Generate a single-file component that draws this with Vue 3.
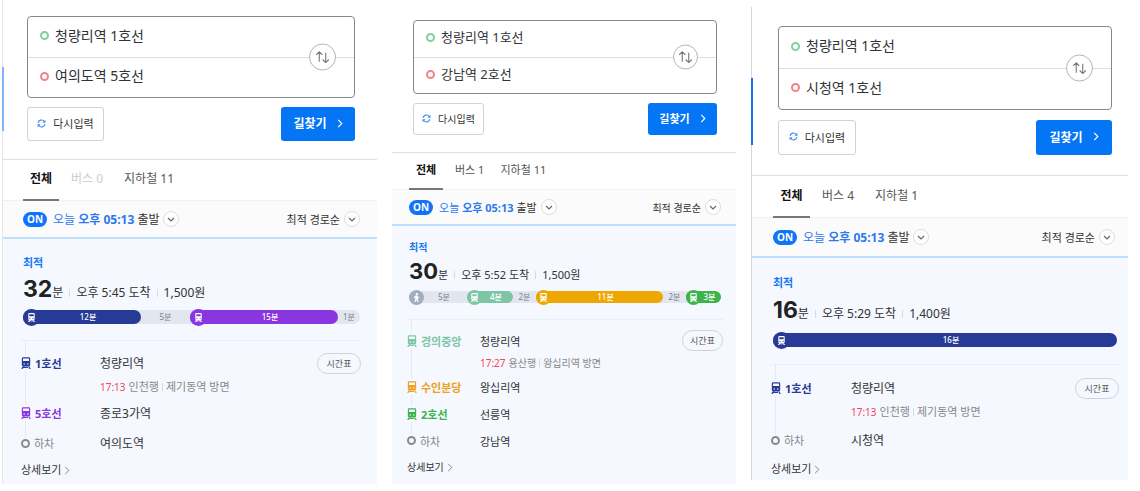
<script setup>
import { ref } from 'vue'

const routes = ref([
  {
    id: 'a',
    size: 'medium',
    rail: true,
    from: '청량리역 1호선',
    to: '여의도역 5호선',
    bus: 0,
    subway: 11,
    minutes: 32,
    arrival: '오후 5:45 도착',
    fare: '1,500원',
    track: [
      { text: '12분', weight: 118, color: '#263a96', icon: 'metro' },
      { text: '5분', weight: 49 },
      { text: '15분', weight: 148, color: '#8936e0', icon: 'metro' },
      { text: '1분', weight: 22 },
    ],
    legs: [
      {
        line: '1호선',
        color: '#263a96',
        station: '청량리역',
        time: '17:13',
        bound: '인천행',
        toward: '제기동역 방면',
      },
      { line: '5호선', color: '#8936e0', station: '종로3가역' },
    ],
    end: '여의도역',
  },
  {
    id: 'b',
    size: 'small',
    rail: false,
    from: '청량리역 1호선',
    to: '강남역 2호선',
    bus: 1,
    subway: 11,
    minutes: 30,
    arrival: '오후 5:52 도착',
    fare: '1,500원',
    track: [
      { text: '5분', weight: 58, icon: 'walk' },
      { text: '4분', weight: 46, color: '#7cc6a5', icon: 'metro' },
      { text: '2분', weight: 23 },
      { text: '11분', weight: 127, color: '#eea700', icon: 'metro' },
      { text: '2분', weight: 23 },
      { text: '3분', weight: 35, color: '#3cb44a', icon: 'metro' },
    ],
    legs: [
      {
        line: '경의중앙',
        color: '#7cc6a5',
        station: '청량리역',
        time: '17:27',
        bound: '용산행',
        toward: '왕십리역 방면',
      },
      { line: '수인분당', color: '#f0a020', station: '왕십리역' },
      { line: '2호선', color: '#3cb44a', station: '선릉역' },
    ],
    end: '강남역',
  },
  {
    id: 'c',
    size: 'large',
    rail: true,
    from: '청량리역 1호선',
    to: '시청역 1호선',
    bus: 4,
    subway: 1,
    minutes: 16,
    arrival: '오후 5:29 도착',
    fare: '1,400원',
    track: [{ text: '16분', weight: 1, color: '#263a96', icon: 'metro' }],
    legs: [
      {
        line: '1호선',
        color: '#263a96',
        station: '청량리역',
        time: '17:13',
        bound: '인천행',
        toward: '제기동역 방면',
      },
    ],
    end: '시청역',
  },
])

function swap(route) {
  const from = route.from
  route.from = route.to
  route.to = from
}
</script>

<template>
  <main class="page">
    <section v-for="r in routes" :key="r.id" class="panel" :class="[r.size, { rail: r.rail }]">
      <form class="search" @submit.prevent>
        <div class="fields">
          <label class="field">
            <span class="dot start"></span>
            <input v-model="r.from" type="text" aria-label="출발지" />
          </label>
          <label class="field">
            <span class="dot goal"></span>
            <input v-model="r.to" type="text" aria-label="도착지" />
          </label>
          <button class="swap" type="button" aria-label="출발지와 도착지 바꾸기" @click="swap(r)">
            <svg viewBox="0 0 16 14">
              <path d="M4.5 12V1.5M1.2 4.8l3.3-3.3 3.3 3.3M11.5 2.5V13M8.2 9.7l3.3 3.3 3.3-3.3" />
            </svg>
          </button>
        </div>
        <div class="actions">
          <button class="reset" type="button">
            <svg viewBox="0 0 12 12">
              <path d="M1.5 5.2A4.5 4.5 0 0 1 9.6 3.3M10.5 6.8A4.5 4.5 0 0 1 2.4 8.7" />
              <path class="tip" d="M11.2 1v3.9H7.3zM.8 11V7.1h3.9z" />
            </svg>
            다시입력
          </button>
          <button class="find" type="submit">
            길찾기
            <svg viewBox="0 0 6 10"><path d="M1 1l4 4-4 4" /></svg>
          </button>
        </div>
      </form>

      <nav class="tabs">
        <button class="tab active" type="button">전체</button>
        <button class="tab" :class="{ empty: r.bus === 0 }" type="button">버스 {{ r.bus }}</button>
        <button class="tab subway" type="button">지하철 {{ r.subway }}</button>
      </nav>

      <div class="options">
        <button class="option depart" type="button">
          <span class="on">ON</span>
          <span><span class="blue">오늘 <b>오후 05:13</b></span> 출발</span>
          <span class="chev"><svg viewBox="0 0 8 5"><path d="M1 1l3 3 3-3" /></svg></span>
        </button>
        <button class="option sort" type="button">
          최적 경로순
          <span class="chev"><svg viewBox="0 0 8 5"><path d="M1 1l3 3 3-3" /></svg></span>
        </button>
      </div>

      <article class="result">
        <div class="summary">
          <strong class="best">최적</strong>
          <p class="total">
            <strong>{{ r.minutes }}</strong><span class="unit">분</span>
            <i class="bar"></i><span>{{ r.arrival }}</span>
            <i class="bar"></i><span>{{ r.fare }}</span>
          </p>
          <div class="track">
            <span
              v-for="(s, i) in r.track"
              :key="i"
              class="seg"
              :class="{ ride: s.color, iconed: s.icon }"
              :style="{ flexGrow: s.weight, background: s.color, color: s.color }"
            >
              <span v-if="s.icon" class="badge" :class="s.icon">
                <svg v-if="s.icon === 'metro'" viewBox="0 0 12 14">
                  <path
                    fill-rule="evenodd"
                    d="M2.5 0h7A1.5 1.5 0 0 1 11 1.5V9.5A1.5 1.5 0 0 1 9.5 11h-7A1.5 1.5 0 0 1 1 9.5V1.5A1.5 1.5 0 0 1 2.5 0zM2.6 2v3h6.8V2zM3.5 7.3a1 1 0 1 0 0 2 1 1 0 0 0 0-2zM8.5 7.3a1 1 0 1 0 0 2 1 1 0 0 0 0-2z"
                  />
                  <path d="M2.3 10.8h2.2L2.6 14H.4zM9.7 10.8H7.5L9.4 14h2.2zM3 11.6h6V13H3z" />
                </svg>
                <svg v-else viewBox="0 0 12 14">
                  <circle cx="6.5" cy="1.8" r="1.8" />
                  <path d="M4.8 4h3l.9 2.2 1.7 1-.6 1.3-1.9-.8v1.9l1.5 4.4H7.4L5.9 10.5 4.6 14H2.6l1.7-5.2V6.6L3.7 8.3H2l.8-3z" />
                </svg>
              </span>
              <span class="segtext">{{ s.text }}</span>
            </span>
          </div>
        </div>

        <ul class="legs">
          <li v-for="leg in r.legs" :key="leg.line" class="leg">
            <div class="row">
              <span class="line" :style="{ color: leg.color }">
                <svg class="train" viewBox="0 0 12 14">
                  <path
                    fill-rule="evenodd"
                    d="M2.5 0h7A1.5 1.5 0 0 1 11 1.5V9.5A1.5 1.5 0 0 1 9.500 11h-7A1.5 1.5 0 0 1 1 9.5V1.5A1.5 1.5 0 0 1 2.5 0zM2.4 1.5v3.2h7.2V1.5zM3.8 7.4a.9.9 0 1 0 0 1.8.9.9 0 0 0 0-1.8zM8.200 7.4a.9.9 0 1 0 0 1.8.9.9 0 0 0 0-1.8z"
                  />
                  <path d="M2.3 10.8h2.4L2.3 14H0zM9.7 10.8H7.3L9.7 14H12zM2.5 11.6h7V13h-7z" />
                </svg>
                {{ leg.line }}
              </span>
              <span class="station">{{ leg.station }}</span>
              <button v-if="leg.time" class="timetable" type="button">시간표</button>
            </div>
            <p v-if="leg.time" class="next">
              <span class="time">{{ leg.time }}</span>
              <span>{{ leg.bound }}</span>
              <i class="bar"></i>
              <span>{{ leg.toward }}</span>
            </p>
          </li>
          <li class="leg">
            <div class="row">
              <span class="line off"><span class="ring"></span>하차</span>
              <span class="station">{{ r.end }}</span>
            </div>
          </li>
        </ul>
        <a class="more" href="#">
          상세보기<svg viewBox="0 0 6 10"><path d="M1 1l4 4-4 4" /></svg>
        </a>
      </article>
    </section>
  </main>
</template>

<style>
body {
  background: #fff;
}
</style>

<style scoped>
* {
  box-sizing: border-box;
}
.page {
  display: grid;
  grid-template-columns: 375fr 344fr 377fr;
  align-items: start;
  gap: 15px;
  padding: 0 12px 0 2px;
  font-family: "Noto Sans", "Noto Sans CJK KR", sans-serif;
  color: #333;
}
button {
  margin: 0;
  padding: 0;
  border: 0;
  background: none;
  font: inherit;
  color: inherit;
  cursor: pointer;
}
svg {
  display: block;
  flex: none;
  fill: none;
  stroke: currentColor;
}
.panel {
  position: relative;
  font-size: var(--fs);
}
.medium {
  --fs: 12px; --fs-sub: 11px; --fs-input: 14px; --fs-big: 23px;
  --form-pad: 16px 22px 18px 24px;
  --field: 40px; --swap: 27px; --action: 34px; --action-gap: 9px;
  --reset-w: 77px; --find-w: 74px;
  --tabs: 40px; --tab-w: 36px; --tab-gap: 21px; --options: 36px;
  --pad: 0 17px 0 20px; --best-top: 14px; --best: 20px; --total: 32px;
  --track-gap: 5px; --track: 14px; --circle: 17px;
  --legs-margin: 16px 16px 0 18px; --legs-top: 7px; --row: 30px; --next: 20px;
  --line-w: 79px; --more-pad: 2px 18px 4px;
  --rail-top: 67px; --rail-h: 64px; --rail-color: #7fb2fb; --rail-line: #e5e7ea;
}
.small {
  --fs: 11px; --fs-sub: 10px; --fs-input: 13px; --fs-big: 22px;
  --form-pad: 20px 19px 17px 21px;
  --field: 36px; --swap: 25px; --action: 32px; --action-gap: 9px;
  --reset-w: 71px; --find-w: 69px;
  --tabs: 36px; --tab-w: 34px; --tab-gap: 16px; --options: 34px;
  --pad: 0 15px 0 17px; --best-top: 12px; --best: 18px; --total: 30px;
  --track-gap: 5px; --track: 12px; --circle: 15px;
  --legs-margin: 16px 13px 0 15px; --legs-top: 7px; --row: 27px; --next: 19px;
  --line-w: 73px; --more-pad: 3px 15px 7px;
}
.large {
  --fs: 12px; --fs-sub: 11px; --fs-input: 14px; --fs-big: 23px;
  --form-pad: 19px 16px 20px 26px;
  --field: 41px; --swap: 27px; --action: 35px; --action-gap: 10px;
  --reset-w: 78px; --find-w: 76px;
  --tabs: 41px; --tab-w: 37px; --tab-gap: 21px; --options: 38px;
  --pad: 0 11px 0 21px; --best-top: 15px; --best: 20px; --total: 34px;
  --track-gap: 6px; --track: 14px; --circle: 17px;
  --legs-margin: 17px 9px 0 19px; --legs-top: 8px; --row: 30px; --next: 22px;
  --line-w: 80px; --more-pad: 4px 19px 1px;
  --rail-top: 71px; --rail-h: 67px; --rail-color: #0a74f5; --rail-line: #d3d6da;
  margin-top: 7px;
}
.rail {
  border-left: 1px solid var(--rail-line);
}
.rail::before {
  content: "";
  position: absolute;
  z-index: 1;
  left: -1px;
  top: var(--rail-top);
  width: 2px;
  height: var(--rail-h);
  background: var(--rail-color);
}
.search {
  padding: var(--form-pad);
  border-bottom: 1px solid #e0e0e0;
}
.fields {
  position: relative;
  border: 1px solid #85878b;
  border-radius: 4px;
}
.field {
  display: flex;
  align-items: center;
  gap: 6px;
  height: var(--field);
  padding: 0 56px 5px 12px;
}
.field + .field {
  border-top: 1px solid #dedede;
}
.dot {
  flex: none;
  width: 9px;
  height: 9px;
  margin-top: 2px;
  border: 2px solid #7fcf9f;
  border-radius: 50%;
}
.goal {
  border-color: #f58288;
}
input {
  flex: 1;
  min-width: 0;
  padding: 0;
  border: 0;
  outline: 0;
  background: none;
  font: inherit;
  font-size: var(--fs-input);
  color: #303338;
}
.swap {
  position: absolute;
  top: 50%;
  right: 18px;
  display: grid;
  place-items: center;
  width: var(--swap);
  height: var(--swap);
  border: 1px solid #b5b5b5;
  border-radius: 50%;
  background: #fff;
  color: #777;
  transform: translateY(-50%);
}
.swap svg {
  width: 15px;
  height: 13px;
  stroke-width: 1.2;
}
.actions {
  display: flex;
  justify-content: space-between;
  margin-top: var(--action-gap);
}
.reset,
.find {
  display: flex;
  align-items: center;
  justify-content: center;
  height: var(--action);
  padding-bottom: 2px;
  border-radius: 3px;
}
.reset {
  gap: 7px;
  width: var(--reset-w);
  border: 1px solid #d0d2d5;
  font-size: var(--fs-sub);
}
.reset svg {
  width: 9px;
  height: 9px;
  color: #3f86f7;
  stroke-width: 1.5;
}
.tip {
  fill: currentColor;
  stroke: none;
}
.find {
  gap: 10px;
  width: var(--find-w);
  background: #0475f4;
  color: #fff;
  font-weight: 700;
}
.find svg {
  width: 6px;
  height: 9px;
  stroke-width: 1.3;
}
.tabs {
  display: flex;
  gap: 12px;
  height: calc(var(--tabs) + 1px);
  padding: var(--pad);
  border-bottom: 1px solid #f0f0f0;
}
.tab {
  height: calc(var(--tabs) + 1px);
  padding-bottom: 5px;
  color: #555;
  white-space: nowrap;
}
.tab.subway {
  margin-left: calc(var(--tab-gap) - 12px);
}
.active {
  width: var(--tab-w);
  border-bottom: 2px solid #777;
  padding-bottom: 3px;
  color: #111;
  font-weight: 700;
}
.empty {
  color: #ccc;
}
.options {
  display: flex;
  align-items: center;
  justify-content: space-between;
  height: calc(var(--options) + 2px);
  padding: var(--pad);
  border-bottom: 2px solid #bfdefb;
  background: #fbfbfb;
}
.option {
  display: flex;
  align-items: center;
  gap: 4px;
  white-space: nowrap;
}
.on {
  margin-right: 2px;
  padding: 0 4px;
  border-radius: 8px;
  background: #0f74f8;
  color: #fff;
  font-size: 10px;
  font-weight: 700;
  line-height: 15px;
}
.blue {
  color: #2b78f2;
}
.sort {
  font-size: var(--fs-sub);
}
.large .sort {
  margin-right: 2px;
}
.chev {
  display: grid;
  place-items: center;
  width: 16px;
  height: 16px;
  border: 1px solid #ddd;
  border-radius: 50%;
  background: #fff;
  color: #666;
}
.chev svg {
  width: 8px;
  height: 5px;
  stroke-width: 1.2;
}
.result {
  background: #f5f8ff;
}
.summary {
  padding: var(--pad);
}
.best {
  display: block;
  padding-top: var(--best-top);
  font-size: var(--fs-sub);
  line-height: var(--best);
  color: #1878f3;
}
.total {
  display: flex;
  align-items: baseline;
  height: var(--total);
  margin: 0;
  line-height: var(--total);
  white-space: nowrap;
}
.total strong {
  font-family: Inter, "Liberation Sans", sans-serif;
  font-size: var(--fs-big);
  color: #222;
}
.bar {
  flex: none;
  width: 1px;
  height: 8px;
  margin: 0 6px;
  background: #d5dae3;
}
.track {
  display: flex;
  align-items: center;
  height: var(--track);
  margin-top: var(--track-gap);
  border-radius: 8px;
  background: #e2e6ef;
}
.seg {
  position: relative;
  display: flex;
  flex: 1 1 0;
  align-items: center;
  justify-content: center;
  min-width: 0;
  height: var(--track);
  border-radius: 8px;
}
.badge {
  position: absolute;
  left: 0;
  display: grid;
  place-items: center;
  width: var(--circle);
  height: var(--circle);
  border-radius: 50%;
  background: currentColor;
}
.badge.walk {
  background: #a3adc2;
}
.badge svg {
  width: 9px;
  height: 9px;
  fill: #fff;
  stroke: none;
}
.segtext {
  color: #7b7f88;
  font-size: 8px;
  line-height: 12px;
  white-space: nowrap;
}
.iconed .segtext {
  padding-left: 12px;
}
.ride .segtext {
  color: #fff;
  font-weight: 500;
}
.legs {
  position: relative;
  margin: var(--legs-margin);
  padding: var(--legs-top) 0 0;
  border-top: 1px solid #e8edf7;
  list-style: none;
}
.legs::before {
  content: "";
  position: absolute;
  left: 4px;
  top: 0;
  bottom: 20px;
  width: 1px;
  background: #e4e9f4;
}
.leg {
  position: relative;
}
.row {
  display: flex;
  align-items: center;
  height: var(--row);
}
.line {
  display: flex;
  align-items: center;
  gap: 4px;
  width: var(--line-w);
  font-size: 11px;
  font-weight: 700;
  white-space: nowrap;
}
.train {
  width: 10px;
  height: 16px;
  padding: 2px 0;
  background: #f5f8ff;
  fill: currentColor;
  stroke: none;
}
.off {
  color: #888;
  font-weight: 400;
}
.ring {
  width: 9px;
  height: 9px;
  border: 2px solid #8a8a8a;
  border-radius: 50%;
  background: #f5f8ff;
}
.station {
  flex: 1;
  color: #333;
}
.timetable {
  width: 44px;
  height: 21px;
  border: 1px solid #cfd2d8;
  border-radius: 11px;
  color: #555;
  font-size: 9px;
}
.small .timetable {
  width: 41px;
}
.next {
  display: flex;
  align-items: baseline;
  gap: 3px;
  height: var(--next);
  margin: 0 0 0 var(--line-w);
  font-size: var(--fs-sub);
  line-height: 18px;
  color: #888;
  white-space: nowrap;
}
.next .bar {
  margin: 0;
}
.time {
  color: #f5474f;
  font-size: 10px;
}
.more {
  display: flex;
  align-items: center;
  gap: 3px;
  padding: var(--more-pad);
  color: #333;
  font-size: var(--fs-sub);
  line-height: 20px;
  text-decoration: none;
}
.more svg {
  width: 6px;
  height: 9px;
  color: #777;
}
</style>
